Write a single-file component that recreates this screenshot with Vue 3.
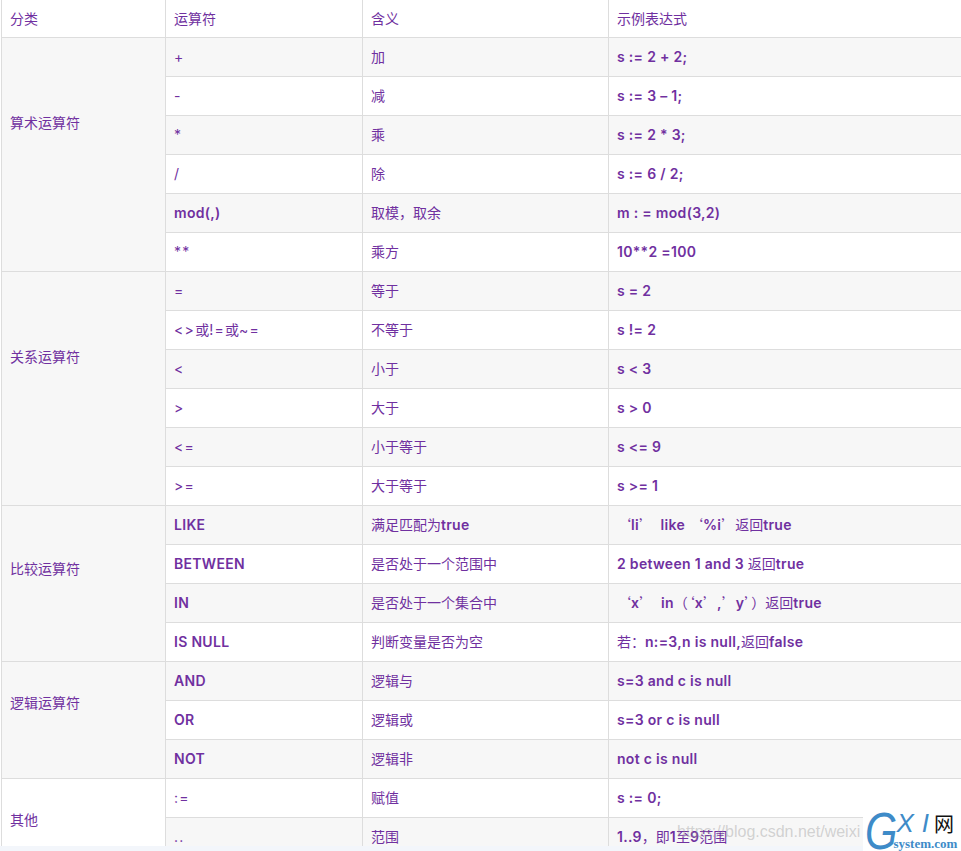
<script setup>
const groups = [
  { name: '算术运算符', shift: 'up1', rows: [
    ['+', '加', 's := 2 + 2;'], ['-', '减', 's := 3 – 1;'], ['*', '乘', 's := 2 * 3;'],
    ['/', '除', 's := 6 / 2;'], ['mod(,)', '取模，取余', 'm : = mod(3,2)'], ['**', '乘方', '10**2 =100'],
  ] },
  { name: '关系运算符', shift: 'up1', rows: [
    ['=', '等于', 's = 2'], ['<>或!=或~=', '不等于', 's != 2'], ['<', '小于', 's < 3'],
    ['>', '大于', 's > 0'], ['<=', '小于等于', 's <= 9'], ['>=', '大于等于', 's >= 1'],
  ] },
  { name: '比较运算符', shift: 'up2', rows: [
    ['LIKE', '满足匹配为true', '‘li’\u00a0 like ‘%i’返回true'],
    ['BETWEEN', '是否处于一个范围中', '2 between 1 and 3 返回true'],
    ['IN', '是否处于一个集合中', '‘x’\u00a0 in（‘x’,’y’）返回true'],
    ['IS NULL', '判断变量是否为空', '若：n:=3,n is null,返回false'],
  ] },
  { name: '逻辑运算符', shift: 'up3', rows: [
    ['AND', '逻辑与', 's=3 and c is null'], ['OR', '逻辑或', 's=3 or c is null'], ['NOT', '逻辑非', 'not c is null'],
  ] },
  { name: '其他', shift: 'down4', rows: [[':=', '赋值', 's := 0;'], ['..', '范围', '1..9，即1至9范围']] },
]
const cjk = /([\u2018\u2019\u3000-\u9fff\uff00-\uffef]+)/
const runs = (t) => t.split(cjk).filter(Boolean).map((s) => ({ s, zh: cjk.test(s) }))
const isSym = (t) => /^[^A-Za-z]+$/.test(t) && !cjk.test(t) || /^<>/.test(t)
const stripe = (g, r) => {
  let n = 0
  for (let i = 0; i < g; i++) n += groups[i].rows.length
  return (n + r) % 2 === 0
}
</script>

<template>
  <div class="page" lang="zh-CN">
    <div class="clip">
      <table class="ops">
        <colgroup>
          <col class="c1" /><col class="c2" /><col class="c3" /><col />
        </colgroup>
        <thead>
          <tr><th>分类</th><th>运算符</th><th>含义</th><th>示例表达式</th></tr>
        </thead>
        <tbody>
          <template v-for="(g, gi) in groups" :key="g.name">
            <tr v-for="(r, ri) in g.rows" :key="r[0]" :class="{ alt: stripe(gi, ri) }">
              <td v-if="ri === 0" :rowspan="g.rows.length" class="cat" :class="[g.shift, { alt: gi < 4 }]">{{ g.name }}</td>
              <td :class="{ sym: isSym(r[0]) }">
                <span v-for="(p, i) in runs(r[0])" :key="i" :class="{ zh: p.zh }">{{ p.s }}</span>
              </td>
              <td class="mean">
                <span v-for="(p, i) in runs(r[1])" :key="i" :class="{ zh: p.zh }">{{ p.s }}</span>
              </td>
              <td class="ex">
                <span v-for="(p, i) in runs(r[2])" :key="i" :class="{ zh: p.zh }">{{ p.s }}</span>
              </td>
            </tr>
          </template>
        </tbody>
      </table>
      <div class="wm">https://blog.csdn.net/weixi</div>
    </div>
    <div class="logo">
      <span class="g">G</span>
      <div class="logo-r">
        <div class="xi"><span class="x">X</span><span class="i">I</span><span class="net">网</span></div>
        <div class="sys">system.com</div>
      </div>
    </div>
  </div>
</template>

<style>
html, body { margin: 0; background: #f3f6fb; }
</style>

<style scoped>
.page {
  position: relative;
  width: 961px;
  height: 851px;
  overflow: hidden;
  background: #f3f6fb;
}
.clip {
  position: relative;
  height: 846px;
  padding-left: 1px;
  box-sizing: border-box;
  overflow: hidden;
  background: #fff;
}
.ops {
  width: 984px;
  table-layout: fixed;
  border-collapse: collapse;
  font-family: Inter, "Noto Sans CJK SC", sans-serif;
  font-size: 14px;
  line-height: 20px;
  letter-spacing: 0.3px;
  color: #7030a0;
}
.c1 { width: 164px; }
.c2 { width: 197px; }
.c3 { width: 246px; }
th, td {
  height: 39px;
  padding: 0 8px;
  box-sizing: border-box;
  border: 1px solid #dddddd;
  text-align: left;
  font-weight: 600;
  white-space: nowrap;
  vertical-align: middle;
}
th {
  height: 37px;
  border-top: 0;
  font-family: "Noto Sans CJK SC", sans-serif;
  font-weight: 400;
  letter-spacing: 0;
  background: #fff;
}
.alt { background: #f7f7f7; }
.cat {
  font-family: "Noto Sans CJK SC", sans-serif;
  font-weight: 400;
  letter-spacing: 0;
  background: #fff;
}
.cat.alt { background: #f7f7f7; }
.up1 { padding-bottom: 64px; }
.up2 { padding-bottom: 30px; }
.up3 { padding-bottom: 36px; }
.down4 { padding-top: 4px; }
.sym { font-weight: 400; letter-spacing: 1.3px; }
.zh {
  font-family: "Noto Sans CJK SC", sans-serif;
  font-weight: 400;
  letter-spacing: 0;
}
.wm {
  position: absolute;
  left: 677px;
  top: 822px;
  font-family: "Liberation Sans", sans-serif;
  font-size: 16px;
  line-height: 20px;
  color: rgba(150, 150, 150, 0.4);
  white-space: nowrap;
}
.logo {
  position: absolute;
  right: 0;
  top: 811px;
  width: 98px;
  height: 40px;
  display: flex;
  background: #fff;
  overflow: hidden;
}
.g {
  flex: none;
  margin: 0 -12px 0 2px;
  font-family: "Liberation Sans", sans-serif;
  font-style: italic;
  font-size: 52px;
  line-height: 40px;
  color: #3e8bc8;
  transform: scaleX(0.8);
  transform-origin: left center;
}
.logo-r { display: flex; flex-direction: column; }
.xi {
  display: flex;
  align-items: center;
  height: 25px;
  padding-left: 3px;
  font-family: "Liberation Sans", sans-serif;
  font-style: italic;
  font-size: 26px;
  line-height: 25px;
  color: #3e8bc8;
}
.x { margin-right: 8px; }
.i { margin-right: 5px; }
.net {
  font-family: "Noto Sans CJK SC", sans-serif;
  font-style: normal;
  font-weight: 400;
  font-size: 20px;
  color: #111;
}
.sys {
  margin-top: 1px;
  font-family: "Liberation Serif", serif;
  font-weight: 700;
  font-size: 13px;
  line-height: 14px;
  color: #3e8bc8;
}
</style>
